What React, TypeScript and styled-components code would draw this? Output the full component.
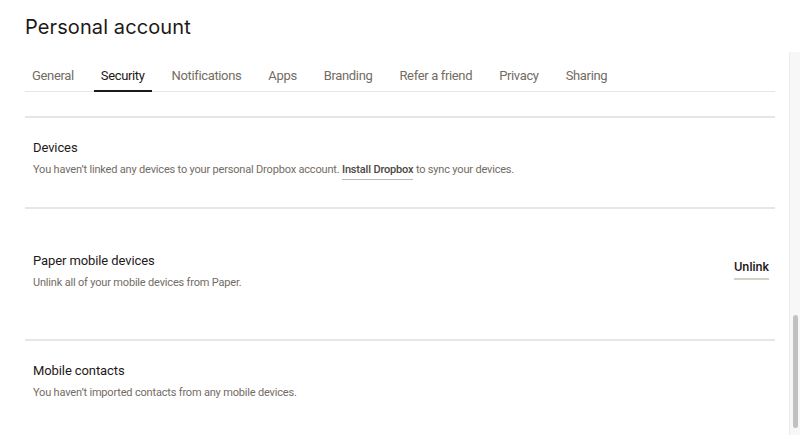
import React, { ReactElement } from 'react'
import styled, { createGlobalStyle, css } from 'styled-components'

const COLOR = {
  ink: '#1e1919',
  muted: '#736c64',
  line: '#e8e6e3',
  rail: '#f7f7f7',
  thumb: '#c1c1c1',
}

const GlobalStyle = createGlobalStyle`
  html, body {
    margin: 0;
    padding: 0;
    background: #ffffff;
  }
  body {
    font-family: Roboto, 'Liberation Sans', sans-serif;
    color: ${COLOR.ink};
    -webkit-font-smoothing: antialiased;
  }
`

const Page = styled.div`
  display: flex;
  flex-direction: row;
  width: 800px;
  height: 435px;
  overflow: hidden;
`

const Main = styled.div`
  flex: 1;
  display: flex;
  flex-direction: column;
  padding: 0 14px 0 25px;
`

const Title = styled.h1`
  margin: 0;
  padding-top: 15px;
  height: 37px;
  box-sizing: border-box;
  font-family: Inter, 'Noto Sans', sans-serif;
  font-size: 20px;
  font-weight: 400;
  letter-spacing: 0.1px;
  color: ${COLOR.ink};
`

const TabBar = styled.nav`
  display: flex;
  flex-direction: row;
  gap: 13px;
  margin-top: 30px;
  border-bottom: 1px solid ${COLOR.line};
`

const Tab = styled.div<{ $active?: boolean }>`
  padding: 0 7px 6px;
  margin-bottom: -1px;
  font-size: 13px;
  line-height: 17px;
  letter-spacing: -0.35px;
  color: ${COLOR.muted};
  border-bottom: 2px solid transparent;
  cursor: pointer;
  ${(p) =>
    p.$active &&
    css`
      color: ${COLOR.ink};
      border-bottom-color: ${COLOR.ink};
    `}
`

const Sections = styled.div`
  display: flex;
  flex-direction: column;
  margin-top: 24px;
`

const Section = styled.section<{ $tall?: boolean }>`
  display: flex;
  flex-direction: row;
  align-items: flex-start;
  justify-content: space-between;
  border-top: 2px solid ${COLOR.line};
  padding: ${(p) => (p.$tall ? '44px 6px 48px 8px' : '22px 6px 29px 8px')};
`

const SectionText = styled.div`
  display: flex;
  flex-direction: column;
  gap: 6px;
`

const SectionTitle = styled.h3`
  margin: 0;
  font-size: 13px;
  line-height: 16px;
  font-weight: 400;
  letter-spacing: -0.1px;
  color: ${COLOR.ink};
`

const SectionDesc = styled.p`
  margin: 0;
  font-size: 11px;
  line-height: 16px;
  letter-spacing: -0.18px;
  color: ${COLOR.muted};
`

const InlineLink = styled.a`
  color: #4d4741;
  font-weight: 500;
  text-decoration: none;
  padding-bottom: 3px;
  border-bottom: 1px solid #bdb8b2;
  cursor: pointer;
`

const ActionLink = styled.button`
  margin-top: 7px;
  padding: 0 0 3px;
  background: none;
  border: none;
  border-bottom: 2px solid #d4d0ca;
  font-family: Inter, 'Noto Sans', sans-serif;
  font-size: 11.5px;
  font-weight: 600;
  line-height: 15px;
  color: ${COLOR.ink};
  cursor: pointer;
`

const ScrollRail = styled.div`
  width: 11px;
  margin-top: 52px;
  display: flex;
  flex-direction: column;
  justify-content: flex-end;
  padding: 0 2px 7px 3px;
  box-sizing: border-box;
  background: ${COLOR.rail};
  border-left: 1px solid #ececec;
`

const ScrollThumb = styled.div`
  height: 113px;
  border-radius: 4px;
  background: ${COLOR.thumb};
`

const tabs = [
  'General',
  'Security',
  'Notifications',
  'Apps',
  'Branding',
  'Refer a friend',
  'Privacy',
  'Sharing',
]

const App = (): ReactElement => {
  return (
    <>
      <GlobalStyle />
      <Page>
        <Main>
          <Title>Personal account</Title>
          <TabBar>
            {tabs.map((t) => (
              <Tab key={t} $active={t === 'Security'}>
                {t}
              </Tab>
            ))}
          </TabBar>
          <Sections>
            <Section>
              <SectionText>
                <SectionTitle>Devices</SectionTitle>
                <SectionDesc>
                  You haven’t linked any devices to your personal Dropbox
                  account. <InlineLink>Install Dropbox</InlineLink> to sync your
                  devices.
                </SectionDesc>
              </SectionText>
            </Section>
            <Section $tall>
              <SectionText>
                <SectionTitle>Paper mobile devices</SectionTitle>
                <SectionDesc>Unlink all of your mobile devices from Paper.</SectionDesc>
              </SectionText>
              <ActionLink>Unlink</ActionLink>
            </Section>
            <Section>
              <SectionText>
                <SectionTitle>Mobile contacts</SectionTitle>
                <SectionDesc>
                  You haven’t imported contacts from any mobile devices.
                </SectionDesc>
              </SectionText>
            </Section>
          </Sections>
        </Main>
        <ScrollRail>
          <ScrollThumb />
        </ScrollRail>
      </Page>
    </>
  )
}

export default App
